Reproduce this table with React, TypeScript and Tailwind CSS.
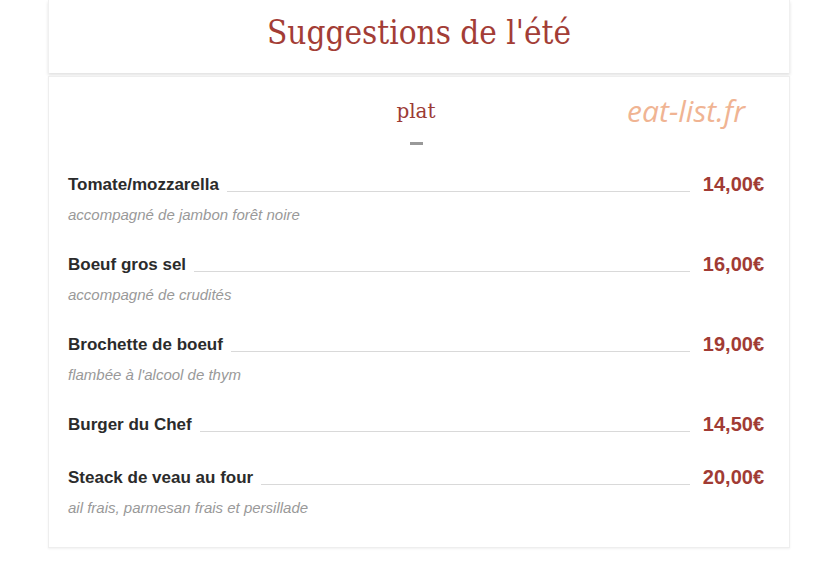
const dishes = [
  { name: 'Tomate/mozzarella', price: '14,00€', note: 'accompagné de jambon forêt noire' },
  { name: 'Boeuf gros sel', price: '16,00€', note: 'accompagné de crudités' },
  { name: 'Brochette de boeuf', price: '19,00€', note: "flambée à l'alcool de thym" },
  { name: 'Burger du Chef', price: '14,50€', note: '' },
  { name: 'Steack de veau au four', price: '20,00€', note: 'ail frais, parmesan frais et persillade' },
];

export default function App() {
  return (
    <div className="min-h-[566px] w-[827px] bg-white font-['Liberation_Sans',Arial,sans-serif]">
      <div className="ml-[48px] w-[742px]">
        <header className="flex h-[73px] items-center justify-center border-x border-[#f0f0f0] bg-white shadow-[0_2px_3px_rgba(0,0,0,0.12)]">
          <h1
            className="pb-[8px] text-[33px] font-light leading-none text-[#a33d36]"
            style={{ fontFamily: "'DejaVu Serif Condensed', 'DejaVu Serif', serif", fontStretch: 'condensed' }}
          >
            Suggestions de l'été
          </h1>
        </header>

        <section className="relative mt-[3px] border border-[#eeeeee] bg-white pb-[1px] pl-[19px] pr-[25px] pt-[24px] shadow-[0_1px_2px_rgba(0,0,0,0.06)]">
          <span className="absolute right-[44px] top-[19px] font-['Open_Sans',sans-serif] text-[30px] italic leading-none text-[#f0b493]">
            eat-list.fr
          </span>

          <div className="flex flex-col items-center">
            <h2 className="font-['DejaVu_Serif',serif] text-[20px] leading-none text-[#9c3b35]">plat</h2>
            <span className="mt-[21px] h-[3px] w-[13px] bg-[#999999]" />
          </div>

          <ul className="mt-[28px] flex flex-col">
            {dishes.map((d) => (
              <li key={d.name} className={d.note ? 'h-[80px]' : 'h-[53px]'}>
                <div className="flex items-end">
                  <span className="text-[17px] font-bold leading-[20px] text-[#2b2b2b]">{d.name}</span>
                  <span className="mx-[8px] mb-[3px] h-[1px] flex-1 bg-[#d9d9d9]" />
                  <span className="ml-[5px] text-[20px] font-bold leading-[22px] text-[#a13b34]">{d.price}</span>
                </div>
                {d.note && <p className="mt-[12px] text-[15px] italic leading-none text-[#999999]">{d.note}</p>}
              </li>
            ))}
          </ul>
        </section>
      </div>
    </div>
  );
}
